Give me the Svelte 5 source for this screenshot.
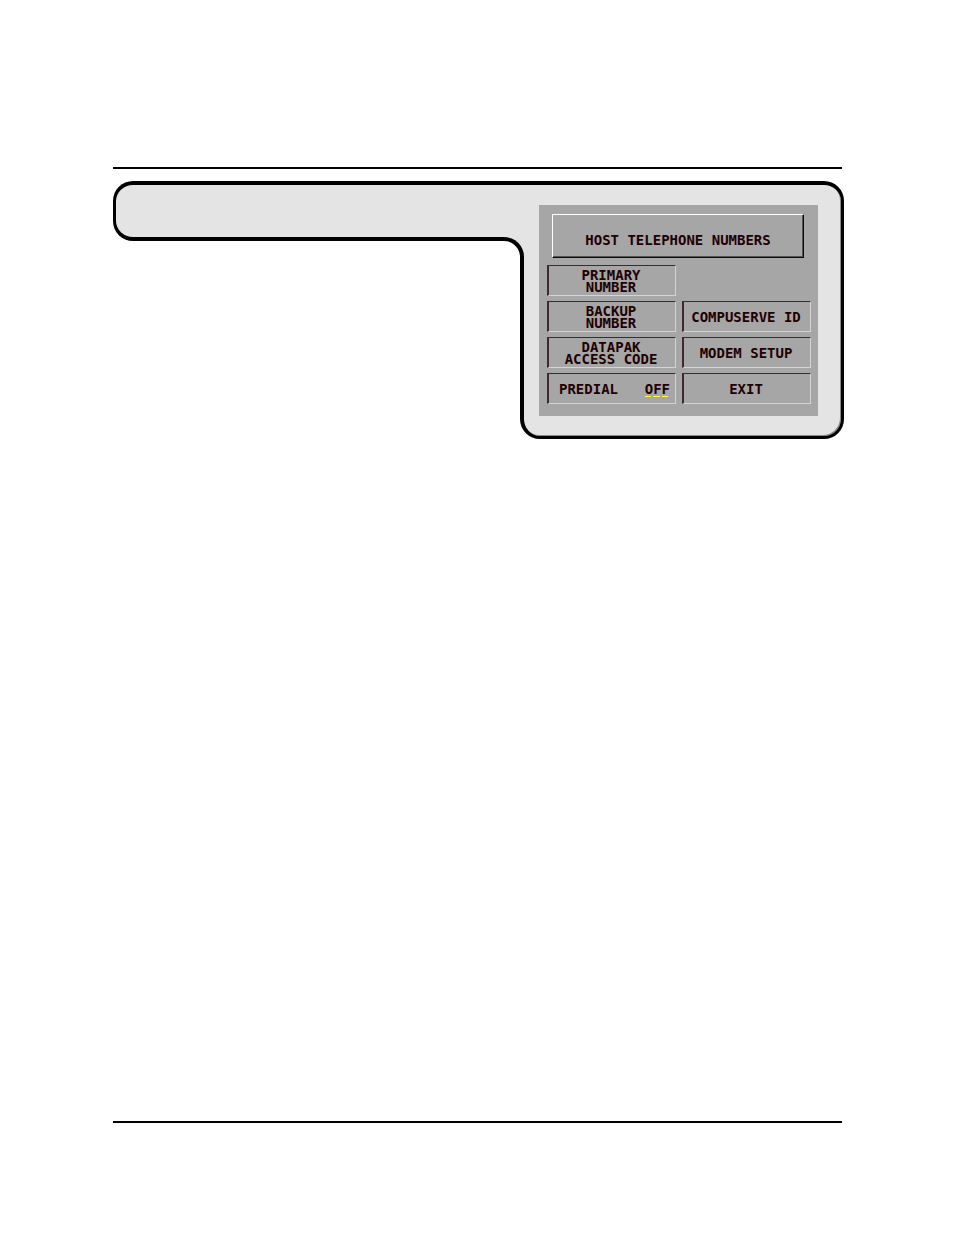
<script>
    const options = [
        { lines: ['PRIMARY', 'NUMBER'] },
        null,
        { lines: ['BACKUP', 'NUMBER'] },
        { lines: ['COMPUSERVE ID'] },
        { lines: ['DATAPAK', 'ACCESS CODE'] },
        { lines: ['MODEM SETUP'] },
        { lines: ['PREDIAL'], value: 'OFF' },
        { lines: ['EXIT'] }
    ];

    let predial = $state('OFF');

    function select(option) {
        if (option.value) {
            predial = predial === 'OFF' ? 'ON' : 'OFF';
        }
    }
</script>

<main class="page">
    <hr class="rule" />

    <section class="frame">
        <div class="arm"></div>
        <div class="neck">
            <div class="neck-top"></div>
            <div class="neck-curve"></div>
        </div>
        <div class="block">
            <div class="screen">
                <h1 class="title">HOST TELEPHONE NUMBERS</h1>
                <div class="options">
                    {#each options as option}
                        {#if option}
                            <button class="option" class:with-value={option.value} onclick={() => select(option)}>
                                <span class="label">
                                    {#each option.lines as line}
                                        <span class="line">{line}</span>
                                    {/each}
                                </span>
                                {#if option.value}
                                    <span class="value">{predial}</span>
                                {/if}
                            </button>
                        {:else}
                            <div></div>
                        {/if}
                    {/each}
                </div>
            </div>
        </div>
    </section>

    <hr class="rule bottom" />
</main>

<style>
    :global(body) {
        margin: 0;
        background: #fff;
    }

    .page {
        box-sizing: border-box;
        min-height: 100vh;
        padding: 167px 112px 112px 113px;
        display: flex;
        flex-direction: column;
    }

    .rule {
        width: 100%;
        height: 2px;
        margin: 0;
        border: 0;
        background: #000;
    }

    .rule.bottom {
        margin-top: auto;
    }

    .frame {
        display: flex;
        align-items: flex-start;
        margin: 12px -2px 24px 0;
    }

    .arm {
        box-sizing: border-box;
        flex: 1;
        height: 60px;
        background: #e4e4e4;
        border: 4px solid #000;
        border-left-width: 3px;
        border-right: 0;
        border-radius: 20px 0 0 20px;
    }

    .neck {
        flex: none;
        width: 20px;
        margin-right: -4px;
        z-index: 1;
        background: #e4e4e4;
    }

    .neck-top {
        box-sizing: border-box;
        height: 56px;
        border-top: 4px solid #000;
    }

    .neck-curve {
        box-sizing: border-box;
        height: 20px;
        background: #fff;
        border: 4px solid #000;
        border-bottom: 0;
        border-left: 0;
        border-top-right-radius: 20px;
    }

    .block {
        flex: none;
        padding: 20px 23px 20px 15px;
        background: #e4e4e4;
        border: 4px solid #000;
        border-width: 4px 3px 3px 4px;
        border-radius: 0 20px 20px 20px;
        box-shadow: inset -1px -1px 0 #888;
    }

    .screen {
        padding: 9px 7px 12px 8px;
        background: #a6a6a6;
        color: #200000;
        font: bold 14px/12px "DejaVu Sans Mono", monospace;
    }

    .title {
        box-sizing: border-box;
        height: 44px;
        margin: 0 7px 7px 5px;
        padding: 19px 0 0;
        border: 1px solid #fff;
        border-right-color: #200000;
        border-bottom-color: #200000;
        box-shadow: inset -1px -1px 0 #555;
        font: inherit;
        text-align: center;
        white-space: nowrap;
    }

    .options {
        display: grid;
        grid-template-columns: 129px 129px;
        grid-auto-rows: 31px;
        gap: 5px 6px;
    }

    .option {
        display: flex;
        align-items: center;
        justify-content: center;
        padding: 0 2px 0 0;
        border: 1px solid #d4d4d4;
        border-top-color: #40282c;
        border-left: 2px solid #40282c;
        background: none;
        color: inherit;
        font: inherit;
        white-space: nowrap;
        cursor: pointer;
    }

    .option.with-value {
        justify-content: space-between;
        padding: 0 5px 0 10px;
    }

    .line {
        display: block;
    }

    .value {
        padding: 2px 0;
        background: repeating-linear-gradient(90deg, #ffff40 0 calc(1ch - 2px), transparent 0 1ch) bottom / 100% 1px no-repeat;
    }
</style>
